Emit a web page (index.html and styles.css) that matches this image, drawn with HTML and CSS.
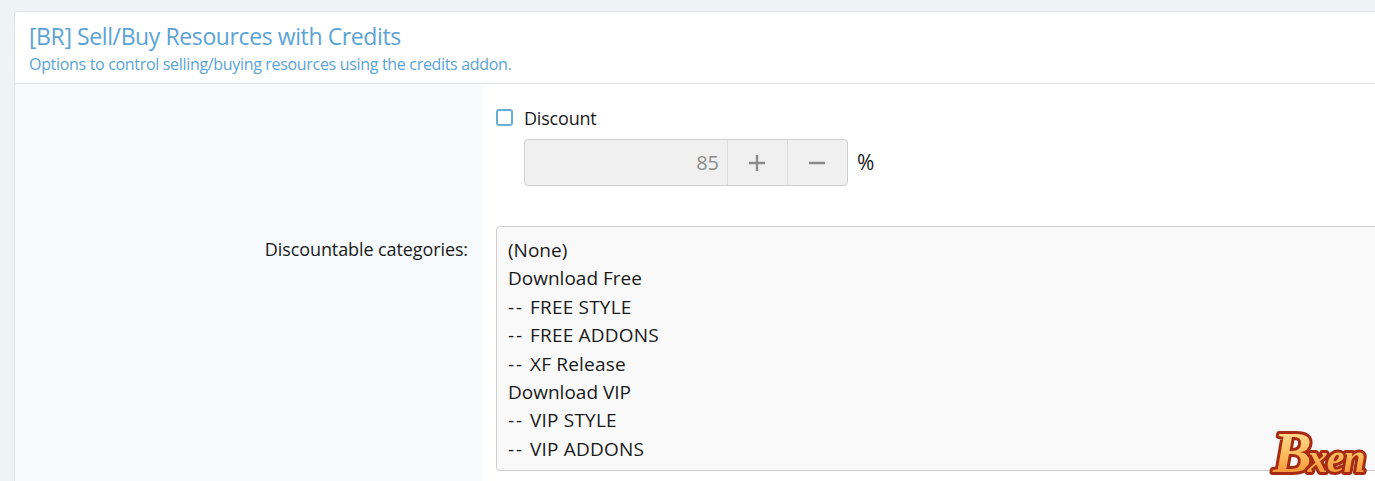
FILE: index.html
```html
<!DOCTYPE html>
<html lang="en">
<head>
<meta charset="utf-8">
<title>Options</title>
<link rel="stylesheet" href="styles.css">
</head>
<body>
<section class="block">
  <header class="block-header">
    <h2 class="block-title">[BR] Sell/Buy Resources with Credits</h2>
    <p class="block-desc">Options to control selling/buying resources using the credits addon.</p>
  </header>
  <div class="form">
    <div class="row row-discount">
      <div class="row-label"></div>
      <div class="row-control">
        <label class="check"><span class="check-box"></span><span>Discount</span></label>
        <div class="spinner-line">
          <div class="spinner">
            <span class="spinner-value">85</span>
            <span class="spinner-btn"><svg width="18" height="18" viewBox="0 0 18 18"><path d="M9 1v16M1 9h16" stroke="#8a8a8a" stroke-width="2.4"/></svg></span>
            <span class="spinner-btn"><svg width="18" height="18" viewBox="0 0 18 18"><path d="M1 9h16" stroke="#8a8a8a" stroke-width="2.4"/></svg></span>
          </div>
          <span class="unit">%</span>
        </div>
      </div>
    </div>
    <div class="row row-categories">
      <div class="row-label"><span>Discountable categories:</span></div>
      <div class="row-control">
        <div class="listbox">
          <div class="opt">(None)</div>
          <div class="opt">Download Free</div>
          <div class="opt sub"><span class="dash">--</span>FREE STYLE</div>
          <div class="opt sub"><span class="dash">--</span>FREE ADDONS</div>
          <div class="opt sub"><span class="dash">--</span>XF Release</div>
          <div class="opt">Download VIP</div>
          <div class="opt sub"><span class="dash">--</span>VIP STYLE</div>
          <div class="opt sub"><span class="dash">--</span>VIP ADDONS</div>
        </div>
      </div>
    </div>
  </div>
</section>
<svg class="logo" width="112" height="90" viewBox="0 0 112 90" role="img" aria-label="Bxen">
  <defs>
    <linearGradient id="logoFill" x1="0" y1="0" x2="0" y2="1">
      <stop offset="0" stop-color="#ffe9a8"/>
      <stop offset="0.55" stop-color="#fdb95a"/>
      <stop offset="1" stop-color="#f27f22"/>
    </linearGradient>
  </defs>
  <text class="logo-text" x="10" y="81"><tspan class="logo-cap">B</tspan><tspan dx="-3">xen</tspan></text>
</svg>
</body>
</html>
```
FILE: styles.css
```css
* { box-sizing: border-box; }
html, body { height: 100%; overflow: hidden; }
body {
  display: flex;
  flex-direction: column;
  margin: 0;
  padding: 11px 0 0 14px;
  background: #eef3f3;
  color: #1a1a1a;
  font-family: "Open Sans", "Noto Sans", sans-serif;
}
.block {
  flex: 1;
  min-height: 0;
  overflow: hidden;
  background: #fff;
  border: 1px solid #dfe3e3;
  border-width: 1px 0 0 1px;
  border-radius: 4px 0 0 0;
}
.block-header {
  height: 72px;
  padding: 9px 14px 0;
  border-bottom: 1px solid #e3e6e6;
}
.block-title {
  margin: 0;
  font-size: 23px;
  line-height: 30px;
  font-weight: 400;
  letter-spacing: -0.4px;
  color: #5aa3d6;
}
.block-desc {
  margin: 2px 0 0;
  font-size: 16px;
  line-height: 22px;
  letter-spacing: -0.32px;
  color: #5aa3d6;
}
.row { display: flex; }
.row-label {
  flex: 0 0 467px;
  padding: 0 14px 0 0;
  text-align: right;
  background: #f7fbfe;
  font-size: 18px;
  letter-spacing: -0.1px;
  line-height: 24px;
}
.row-control { flex: 1; min-width: 0; padding-left: 14px; }
.row-discount .row-control { padding-top: 22px; height: 142px; }
.row-categories .row-label { padding-top: 11px; }
.row-categories .row-label, .row-categories .row-control { height: 260px; }
.check {
  display: flex;
  align-items: center;
  gap: 11px;
  height: 23px;
  margin-bottom: 10px;
  font-size: 18px;
  letter-spacing: -0.2px;
}
.check-box {
  width: 17px;
  height: 17px;
  border: 2px solid #6aaed6;
  border-radius: 3px;
  background: #fff;
}
.spinner-line {
  display: flex;
  align-items: center;
  gap: 9px;
  margin: 0 0 0 28px;
}
.spinner {
  display: flex;
  width: 324px;
  height: 47px;
  background: #f0f0f0;
  border: 1px solid #cfcfcf;
  border-radius: 4px;
}
.spinner-value {
  flex: 1;
  padding-right: 8px;
  text-align: right;
  line-height: 45px;
  font-size: 20px;
  color: #8c8c8c;
}
.spinner-btn {
  flex: 0 0 60px;
  display: flex;
  align-items: center;
  justify-content: center;
  padding-right: 2px;
  border-left: 1px solid #dcdcdc;
}
.unit { font-size: 21px; line-height: 45px; }
.listbox {
  width: calc(100% + 12px);
  height: 245px;
  padding: 9px 11px;
  background: #f9f9f9;
  border: 1px solid #cfcfcf;
  border-radius: 4px;
  font-size: 19px;
}
.opt { height: 28.4px; line-height: 28px; }
.sub { letter-spacing: 0.2px; }
.dash { display: inline-block; width: 22px; letter-spacing: 2px; }
.logo {
  position: fixed;
  right: 0;
  bottom: 0;
}
.logo-text {
  font-family: "Liberation Serif", serif;
  font-weight: 700;
  font-style: italic;
  font-size: 40px;
  letter-spacing: -1px;
  fill: url(#logoFill);
  stroke: #a62b12;
  stroke-width: 6px;
  stroke-linejoin: round;
  paint-order: stroke fill;
}
.logo-cap { font-size: 58px; }
```
